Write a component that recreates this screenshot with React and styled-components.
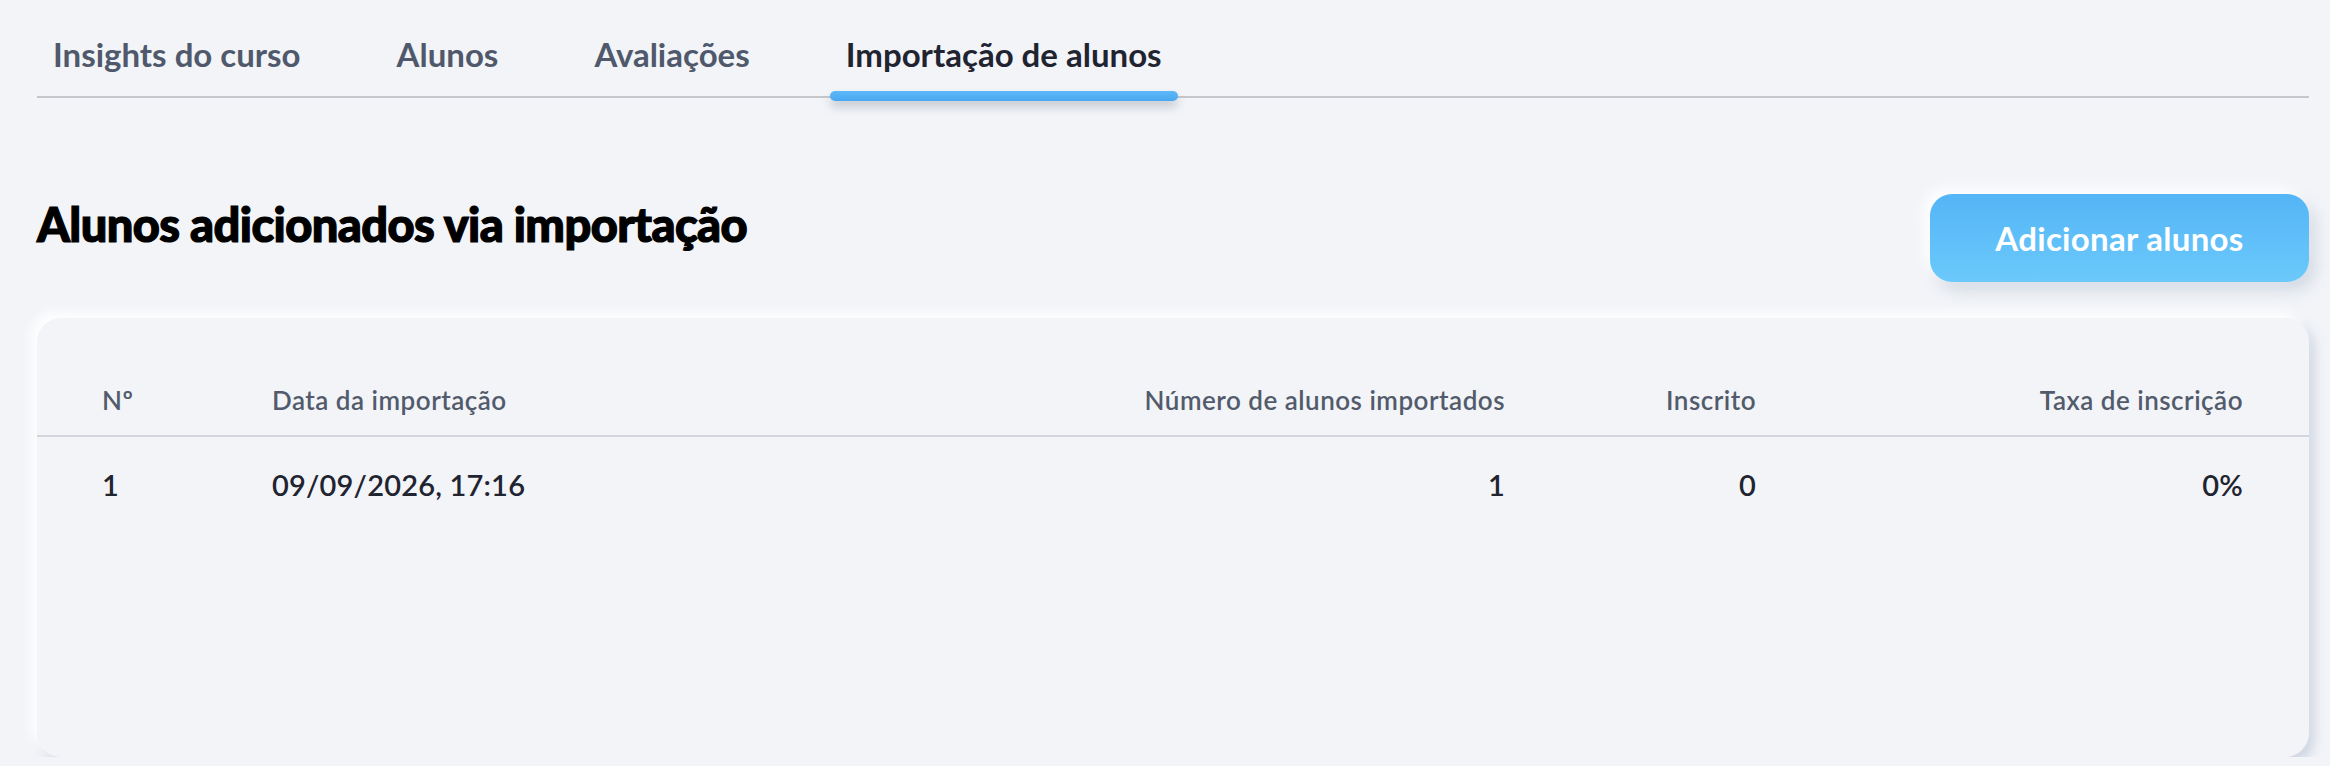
import React from "react";
import styled, { createGlobalStyle } from "styled-components";

const GlobalStyle = createGlobalStyle`
  body {
    margin: 0;
    background: #f2f4f8;
    font-family: Lato, "Open Sans", sans-serif;
  }
`;

const Page = styled.main`
  padding: 0 21px 0 37px;
`;

const TabBar = styled.nav`
  display: flex;
  gap: 64px;
  border-bottom: 2px solid #c5c7cc;
`;

const Tab = styled.div`
  position: relative;
  padding: 34px 16px 22px;
  font-size: 33px;
  line-height: 40px;
  font-weight: 700;
  color: ${(p) => (p.$active ? "#1f2430" : "#4f596b")};
  white-space: nowrap;
`;

const Indicator = styled.span`
  position: absolute;
  left: 0;
  right: 0;
  bottom: -5px;
  height: 10px;
  border-radius: 5px;
  background: linear-gradient(180deg, #5cb8f7, #4aa8f1);
  box-shadow: 0 6px 10px rgba(40, 50, 70, 0.22);
`;

const HeadingRow = styled.header`
  display: flex;
  justify-content: space-between;
  align-items: flex-start;
  margin-top: 96px;
`;

const Title = styled.h1`
  margin: 0;
  padding-top: 2px;
  font-size: 47px;
  line-height: 1.2;
  font-weight: 900;
  letter-spacing: -0.6px;
  color: #000;
  -webkit-text-stroke: 1.2px #000;
`;

const AddButton = styled.button`
  width: 379px;
  height: 88px;
  border: none;
  border-radius: 22px;
  background: linear-gradient(180deg, #54b5f7, #6bc9fa);
  color: #fff;
  font-family: inherit;
  font-size: 33px;
  font-weight: 700;
  letter-spacing: 0.3px;
  box-shadow: -6px -6px 14px #ffffff, 6px 8px 16px rgba(150, 162, 185, 0.35);
  cursor: pointer;
`;

const Card = styled.section`
  margin-top: 36px;
  height: 439px;
  border-radius: 24px;
  background: #f2f4f8;
  box-shadow: -6px -6px 12px #ffffff, 5px 6px 12px rgba(160, 172, 195, 0.45);
  overflow: hidden;
`;

const Row = styled.div`
  display: grid;
  grid-template-columns: 170px 833px 400px 251px 1fr;
  padding: ${(p) => (p.$head ? "67px 66px 19px 65px" : "30px 66px 0 65px")};
  border-bottom: ${(p) => (p.$head ? "2px solid #d3d6dc" : "none")};
`;

const Cell = styled.div`
  text-align: ${(p) => (p.$right ? "right" : "left")};
  font-size: ${(p) => (p.$head ? "26px" : "29px")};
  line-height: ${(p) => (p.$head ? "31px" : "35px")};
  font-weight: ${(p) => (p.$head ? 600 : 600)};
  letter-spacing: ${(p) => (p.$head ? "0.5px" : "0.2px")};
  color: ${(p) => (p.$head ? "#525b6c" : "#1f2430")};
  white-space: nowrap;
`;

const tabs = ["Insights do curso", "Alunos", "Avaliações", "Importação de alunos"];

const columns = [
  { label: "Nº", right: false },
  { label: "Data da importação", right: false },
  { label: "Número de alunos importados", right: true },
  { label: "Inscrito", right: true },
  { label: "Taxa de inscrição", right: true },
];

const imports = [["1", "09/09/2026, 17:16", "1", "0", "0%"]];

export default function App() {
  return (
    <>
      <GlobalStyle />
      <Page>
        <TabBar>
          {tabs.map((t, i) => (
            <Tab key={t} $active={i === 3}>
              {t}
              {i === 3 && <Indicator />}
            </Tab>
          ))}
        </TabBar>

        <HeadingRow>
          <Title>Alunos adicionados via importação</Title>
          <AddButton>Adicionar alunos</AddButton>
        </HeadingRow>

        <Card>
          <Row $head>
            {columns.map((c) => (
              <Cell key={c.label} $head $right={c.right}>
                {c.label}
              </Cell>
            ))}
          </Row>
          {imports.map((row) => (
            <Row key={row[0]}>
              {row.map((v, i) => (
                <Cell key={i} $right={columns[i].right}>
                  {v}
                </Cell>
              ))}
            </Row>
          ))}
        </Card>
      </Page>
    </>
  );
}
